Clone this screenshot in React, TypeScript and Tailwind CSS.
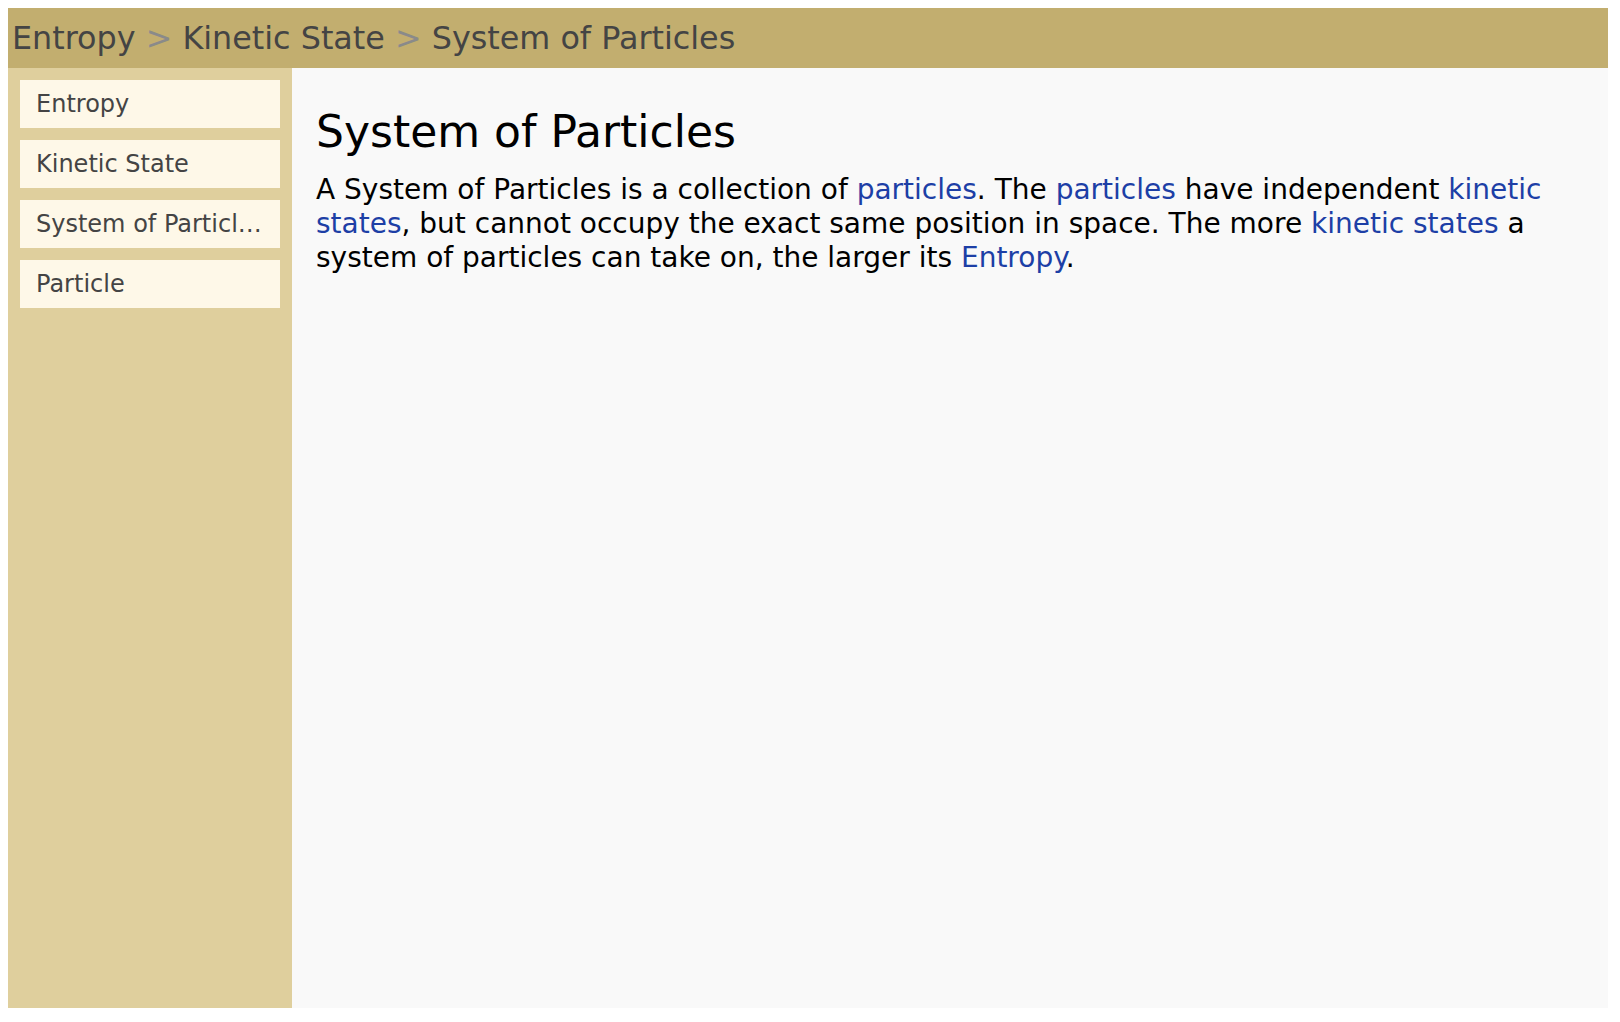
import React from 'react';

const font = { fontFamily: '"DejaVu Sans", sans-serif' };

const crumbs = ['Entropy', 'Kinetic State', 'System of Particles'];
const navItems = ['Entropy', 'Kinetic State', 'System of Particles', 'Particle'];

function Link({ children }: { children: React.ReactNode }) {
    return <a className="text-[#1d3fa6] cursor-pointer">{children}</a>;
}

export default function App() {
    return (
        <div className="bg-white min-h-screen p-2" style={font}>
            <div className="w-[1600px] h-[1000px] flex flex-col">
                <div className="h-[60px] bg-[#c2ae6f] flex items-center px-[4px] text-[31.8px] text-[#444444] shrink-0 whitespace-pre">
                    {crumbs.map((c, i) => (
                        <span key={c}>
                            {i > 0 && <span className="text-[#8a8a8a]"> &gt; </span>}
                            {c}
                        </span>
                    ))}
                </div>
                <div className="flex flex-1 min-h-0">
                    <div className="w-[284px] bg-[#dfcf9d] p-3 flex flex-col gap-3 shrink-0">
                        {navItems.map((n) => (
                            <div
                                key={n}
                                className="h-12 bg-[#fef8e8] px-4 flex items-center text-[24px] text-[#444444] min-w-0"
                            >
                                <span className="truncate">{n}</span>
                            </div>
                        ))}
                    </div>
                    <div className="flex-1 bg-[#f9f9f9] px-6 pt-9 text-black">
                        <h1 className="text-[44px] leading-[1.25] mb-[14px]">System of Particles</h1>
                        <p className="text-[28px] leading-[34px]">
                            A System of Particles is a collection of <Link>particles</Link>. The{' '}
                            <Link>particles</Link> have independent <Link>kinetic states</Link>, but cannot
                            occupy the exact same position in space. The more <Link>kinetic states</Link> a
                            system of particles can take on, the larger its <Link>Entropy</Link>.
                        </p>
                    </div>
                </div>
            </div>
        </div>
    );
}
